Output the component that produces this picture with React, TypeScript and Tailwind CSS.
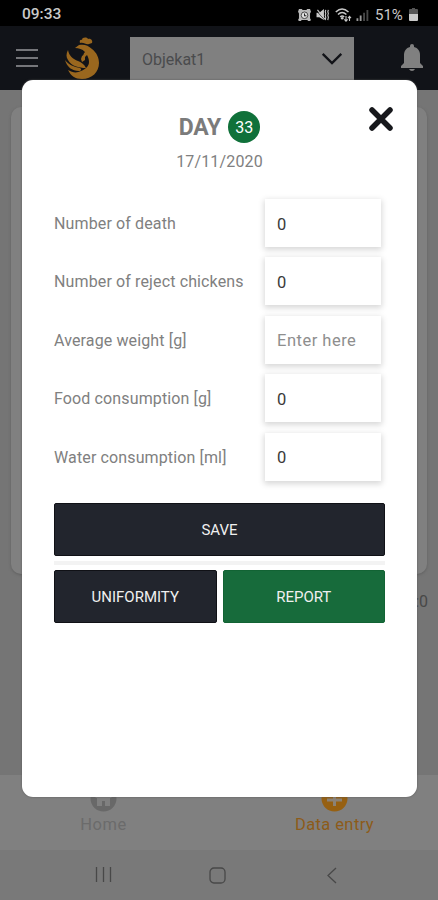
import { useState } from "react";

const fields = [
  { label: "Number of death", value: "0" },
  { label: "Number of reject chickens", value: "0" },
  { label: "Average weight [g]", value: "" },
  { label: "Food consumption [g]", value: "0" },
  { label: "Water consumption [ml]", value: "0" },
];

function StatusBar() {
  return (
    <div className="flex h-[26px] items-center bg-black pr-[20px] pl-[22px] text-[#c9c9c9]">
      <span className="pt-[3px] text-[15.5px] font-medium">09:33</span>
      <div className="ml-auto flex items-center pt-[3px]">
        {/* Alarm */}
        <svg className="mr-[5px] h-[12px] w-[13px]" viewBox="0 0 14 13">
          <path d="M1 0h3l1 1h4l1-1h3l1 3-1 2v5l1 2-1 1h-2l-1-1H4l-1 1H1l-1-1 1-2V5L0 3z" fill="#b9b9b9" />
          <circle cx="7" cy="6.8" r="3.6" fill="#e0e0e0" stroke="#333" strokeWidth=".9" />
          <path d="M7 4.8v2.5h2" fill="none" stroke="#222" strokeWidth="1.1" />
        </svg>
        {/* Muted, vibrating */}
        <svg className="mr-[5px] h-[12px] w-[14px]" viewBox="0 0 14 13">
          <path d="M0 4h3l5-4v12L3 9H0z" fill="#c9c9c9" />
          <path d="M0 2l9 10" stroke="#000" strokeWidth=".8" />
          <path d="M1 1l8 10" stroke="#c9c9c9" strokeWidth="1.2" />
          <path d="M10 1l-.6 2 .6 2-.6 2 .6 2-.6 3M12.800 1l-.6 2 .6 2-.6 2 .6 2-.6 3" fill="none" stroke="#c9c9c9" strokeWidth="1.2" />
        </svg>
        {/* Wi-Fi */}
        <svg className="mr-[4px] h-[14px] w-[17px]" viewBox="0 0 17 14">
          <g fill="none" stroke="#c9c9c9" strokeWidth="1.5">
            <path d="M.8 4Q7 -2 13.5 4M3 6.5q4-4 8.4 0M5.2 9q2-2 4 0" />
            <path d="M11 8v5M9.4 11.3l1.6 1.9 1.6-1.9M14.5 13V8.3M13 10.2l1.5-1.9 1.5 1.9" strokeWidth="1.1" />
          </g>
          <circle cx="7.2" cy="10.2" r="1.3" fill="#c9c9c9" />
        </svg>
        <svg className="mr-[6px] h-[12px] w-[13px]" viewBox="0 0 13 13">
          <path d="M0 10h2v3H0zM3.5 7h2v6h-2z" fill="#999" />
          <path d="M7.2 4h2v9h-2zM10.8 1h2v12h-2z" fill="#484848" />
        </svg>
        <span className="w-[34px] pt-px text-[15px] leading-5 whitespace-nowrap">51%</span>
        <svg className="h-[13px] w-[9px]" viewBox="0 0 9 13">
          <path d="M3 0h3v1h2q1 0 1 1v4H0V2q0-1 1-1h2z" fill="#555" />
          <path d="M0 6h9v6q0 1-1 1H1q-1 0-1-1z" fill="#c9c9c9" />
        </svg>
      </div>
    </div>
  );
}

function RoosterLogo() {
  return (
    <svg className="mt-[11px] ml-[26px] h-[42px] w-[36px]" viewBox="0 0 36 42">
      {/* Comb */}
      <path d="M16 6c-1-3 1-4 2-3 0-3 5-3 6-1 3-1 5 2 4 4l-3 1c-3 1-5-2-9-1z" fill="#9a671e" />
      {/* Head, neck and breast */}
      <path
        d="M11 11l4-3c5-1 9 0 13 4 5 4 7 9 7 14 0 9-7 16-17 16-7 0-11-3-14-9 5 3 9 3 13 1 5-2 8-5 8-9 0-3-1-5-2-7l-3 3c-1-2-1-4 1-6-3-3-6-4-10-4z"
        fill="#9a671e"
      />
      {/* Tail feathers */}
      <path d="M4 13c1 6 5 9 10 11 3 1 6 3 8 7-7 0-15-2-18-8-2-3-2-6 0-10zM1 23c4 5 9 7 15 8 2 1 1 3-1 3C8 34 3 30 1 23z" fill="#9a671e" />
      <path d="M18 19l3-2v6l-3 2-1-3z" fill="#9a671e" />
    </svg>
  );
}

function Header() {
  return (
    <header className="flex h-[64px] items-start bg-[#111318]">
      <button className="mt-[23px] ml-[16px] flex w-[22px] flex-col gap-[6px]" aria-label="Menu">
        <span className="h-[2px] bg-[#75767a]" />
        <span className="h-[2px] bg-[#75767a]" />
        <span className="h-[2px] bg-[#75767a]" />
      </button>
      <RoosterLogo />
      <div className="mt-[11px] ml-[30px] flex h-[43px] w-[224px] items-center bg-[#808080] pr-[11px] pl-[12px]">
        <span className="pt-[3px] text-[16px] text-[#4a4b4d]">Objekat1</span>
        <svg className="ml-auto h-[13px] w-[22px]" viewBox="0 0 22 14" fill="none" stroke="#121318" strokeWidth="2.5">
          <path d="M1 2l10 10L21 2" />
        </svg>
      </div>
      <svg className="mt-[18px] ml-[47px] h-[27px] w-[22px]" viewBox="0 0 22 27" fill="#808080">
        <path d="M9 3V2q0-2 2-2t2 2v1c4 1 6 4 6 8v8l3 3v2H0v-2l3-3v-8c0-4 2-7 6-8zM8 25h6q-1 2-3 2t-3-2z" />
      </svg>
    </header>
  );
}

function BottomNav() {
  return (
    <nav className="flex h-[75px] bg-[#808080] pt-[10px]">
      <div className="flex w-[207px] flex-col items-center">
        <svg className="h-[27px] w-[27px]" viewBox="0 0 27 27">
          <circle cx="13.5" cy="13.5" r="13" fill="#686868" />
          <path d="M5 13l8.5-8 8.5 8h-2v8h-5v-5h-3v5H7v-8z" fill="#808080" />
        </svg>
        <span className="pt-px text-[16.5px] leading-6 tracking-[0.5px] text-[#6b6b6b]">Home</span>
      </div>
      <div className="ml-[24px] flex w-[207px] flex-col items-center">
        <svg className="h-[27px] w-[27px]" viewBox="0 0 27 27">
          <circle cx="13.5" cy="13.5" r="13" fill="#966012" />
          <path d="M13.5 6v15M6 15h15" stroke="#8b8277" strokeWidth="3" />
        </svg>
        <span className="pt-px text-[16.5px] leading-6 tracking-[0.4px] whitespace-nowrap text-[#8d5b19]">Data entry</span>
      </div>
    </nav>
  );
}

function SystemBar() {
  return (
    <div className="flex h-[50px] items-center bg-[#797979] text-[#484848]">
      <svg className="ml-[95px] h-[16px] w-[17px]" viewBox="0 0 17 16" stroke="currentColor" strokeWidth="1.3">
        <path d="M1.5 0v15M8.5 0v15M15.5 0v15" />
      </svg>
      <svg className="ml-[97px] h-[17px] w-[17px]" viewBox="0 0 17 17" fill="none" stroke="currentColor" strokeWidth="1.3">
        <rect x="1" y="1" width="15" height="15" rx="4" />
      </svg>
      <svg className="ml-[101px] h-[17px] w-[10px]" viewBox="0 0 10 17" fill="none" stroke="currentColor" strokeWidth="1.3">
        <path d="M9 1L1 8.5L9 16" />
      </svg>
    </div>
  );
}

function DayDialog() {
  const [values, setValues] = useState(fields.map((f) => f.value));

  return (
    <div
      role="dialog"
      className="absolute top-[80px] left-[22px] h-[717px] w-[395px] rounded-[11px] bg-white px-[32px] shadow-[0_0_2px_#555]"
    >
      <button className="absolute top-[27px] right-[24px]" aria-label="Close">
        <svg className="h-[24px] w-[24px]" viewBox="0 0 24 24" stroke="#17181c" strokeWidth="5.5" strokeLinecap="round">
          <path d="M3 3l18 18M21 3L3 21" />
        </svg>
      </button>

      {/* Title */}
      <div className="mt-[31px] flex h-[32px] items-center justify-center gap-[7px]">
        <h1 className="pt-[3px] text-[23px] font-bold tracking-[-0.2px] text-[#7b7b7b]">DAY</h1>
        <span className="flex size-[32px] items-center justify-center rounded-full bg-[#10713a] pt-[2px] text-[16px] text-white">33</span>
      </div>
      <p className="mt-[7px] text-center text-[16px] leading-6 tracking-[0.15px] text-[#808080]">17/11/2020</p>

      {/* Fields */}
      <div className="mt-[25px] flex flex-col gap-[10.4px] pr-[4px]">
        {fields.map((field, i) => (
          <label key={field.label} className="flex h-[48px] items-center justify-between">
            <span className="pt-[2px] text-[16px] tracking-[0.13px] whitespace-nowrap text-[#808080]">{field.label}</span>
            <input
              value={values[i]}
              placeholder="Enter here"
              onChange={(e) => setValues(values.map((v, j) => (j === i ? e.target.value : v)))}
              className="h-[48px] w-[116px] bg-white pt-[2px] pl-[12px] text-[16.5px] text-[#3a3a3a] shadow-[0_2px_6px_1px_#d8d8d8] outline-none placeholder:tracking-[0.5px] placeholder:text-[#8e8e8e]"
            />
          </label>
        ))}
      </div>

      {/* Actions */}
      <button className="mt-[22px] flex h-[53px] w-full items-center justify-center rounded-[2px] border border-[#101116] bg-[#22252d] pt-[2px] text-[15px] text-[#f0f0f0]">
        SAVE
      </button>
      <div className="mt-[5px] h-[4px] bg-[#f3f3f3]" />
      <div className="mt-[5px] grid grid-cols-2 gap-[6px]">
        <button className="h-[53px] rounded-[2px] border border-[#101116] bg-[#22252d] pt-[2px] text-[15px] text-[#f0f0f0]">UNIFORMITY</button>
        <button className="h-[53px] rounded-[2px] border border-[#126334] bg-[#176b3b] pt-[2px] text-[15px] text-[#f0f0f0]">REPORT</button>
      </div>
    </div>
  );
}

export default function App() {
  return (
    <div className="relative flex h-[900px] w-[438px] flex-col overflow-hidden bg-[#757575] font-['Roboto',sans-serif]">
      <StatusBar />
      <Header />
      <main className="flex-1 px-[11px] pt-[17px]">
        <div className="h-[467px] rounded-[10px] bg-[#808080] shadow-[0_1px_3px_#606060]" />
        <p className="-mr-px mt-[16px] text-right text-[16px] leading-6 text-[#484848]">:0</p>
      </main>
      <BottomNav />
      <SystemBar />
      <DayDialog />
    </div>
  );
}
